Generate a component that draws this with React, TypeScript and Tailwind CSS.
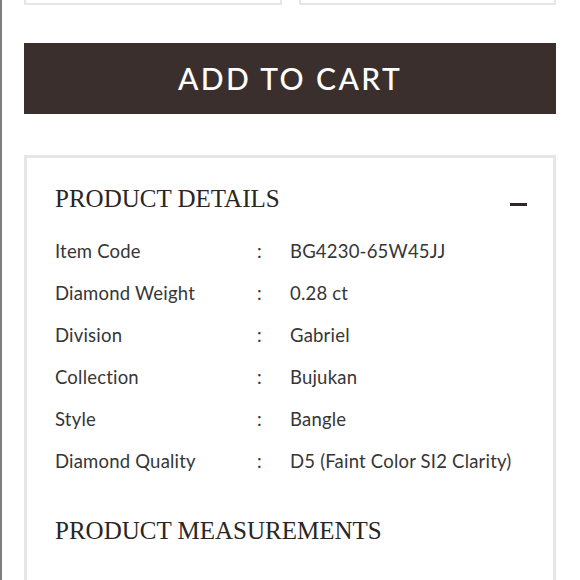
import React from 'react'

const rows: [string, string][] = [
  ['Item Code', 'BG4230-65W45JJ'],
  ['Diamond Weight', '0.28 ct'],
  ['Division', 'Gabriel'],
  ['Collection', 'Bujukan'],
  ['Style', 'Bangle'],
  ['Diamond Quality', 'D5 (Faint Color SI2 Clarity)'],
]

export default function App() {
  return (
    <div className="w-[580px] h-[580px] overflow-hidden bg-white border-l-2 border-[#7d7d7d] pl-[22px] pr-[24px]">
      <div className="flex gap-[17px]">
        <div className="flex-1 h-[5px] border-x-2 border-b-2 border-[#e6e6e6]" />
        <div className="flex-1 h-[5px] border-x-2 border-b-2 border-[#e6e6e6]" />
      </div>

      <button className="mt-[38px] w-full h-[71px] bg-[#3a2f2c] text-white text-[30px] tracking-[2.4px] font-['Lato',sans-serif] font-medium flex items-center justify-center">
        ADD TO CART
      </button>

      <div className="mt-[41px] border-[3px] border-b-0 border-[#e6e6e6] px-[28px] pt-[26px] h-[500px]">
        <div className="flex items-center justify-between h-[30px]">
          <h2 className="font-['Liberation_Serif',serif] text-[25px] text-[#2b2523] leading-[30px]">PRODUCT DETAILS</h2>
          <span className="block w-[17px] h-[3px] bg-[#2d2826] mt-[10px] mr-[-2px]" />
        </div>

        <div className="mt-[17px] font-['Lato',sans-serif] text-[18.5px] tracking-[0.2px] text-[#363636]">
          {rows.map(([k, v]) => (
            <div key={k} className="grid grid-cols-[202px_33px_1fr] h-[42px] items-center">
              <span>{k}</span>
              <span>:</span>
              <span>{v}</span>
            </div>
          ))}
        </div>

        <h2 className="mt-[33px] font-['Liberation_Serif',serif] text-[25px] text-[#2b2523] leading-[30px]">PRODUCT MEASUREMENTS</h2>
      </div>
    </div>
  )
}
